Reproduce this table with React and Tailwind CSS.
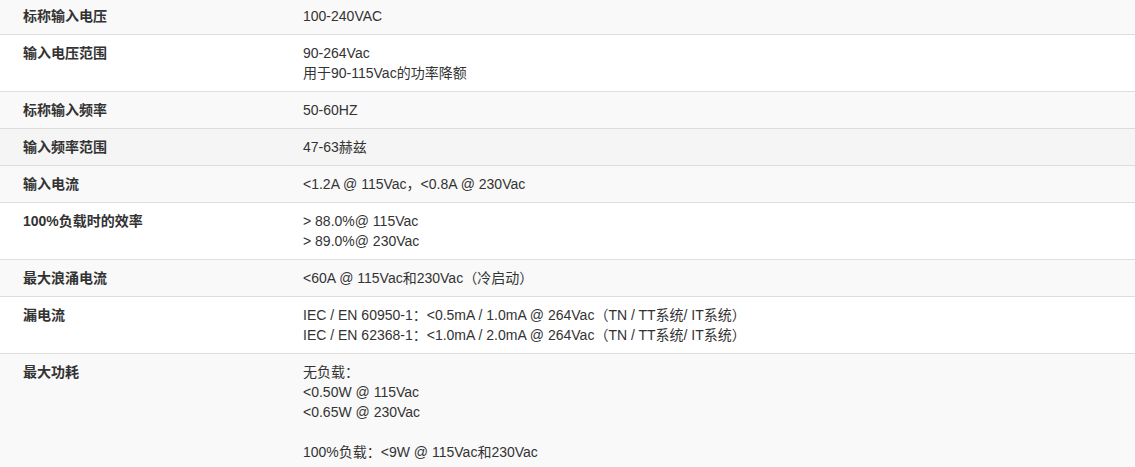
import React from "react";

const rows = [
  { label: "标称输入电压", lines: ["100-240VAC"], bg: "bg-[#f9f9f9]" },
  { label: "输入电压范围", lines: ["90-264Vac", "用于90-115Vac的功率降额"], bg: "bg-white" },
  { label: "标称输入频率", lines: ["50-60HZ"], bg: "bg-[#f9f9f9]" },
  { label: "输入频率范围", lines: ["47-63赫兹"], bg: "bg-[#f5f5f5]" },
  { label: "输入电流", lines: ["<1.2A @ 115Vac，<0.8A @ 230Vac"], bg: "bg-[#f9f9f9]" },
  { label: "100%负载时的效率", lines: ["> 88.0%@ 115Vac", "> 89.0%@ 230Vac"], bg: "bg-white" },
  { label: "最大浪涌电流", lines: ["<60A @ 115Vac和230Vac（冷启动）"], bg: "bg-[#f9f9f9]" },
  {
    label: "漏电流",
    lines: [
      "IEC / EN 60950-1：<0.5mA / 1.0mA @ 264Vac（TN / TT系统/ IT系统）",
      "IEC / EN 62368-1：<1.0mA / 2.0mA @ 264Vac（TN / TT系统/ IT系统）",
    ],
    bg: "bg-white",
  },
  {
    label: "最大功耗",
    lines: ["无负载：", "<0.50W @ 115Vac", "<0.65W @ 230Vac", "", "100%负载：<9W @ 115Vac和230Vac"],
    bg: "bg-[#f9f9f9]",
  },
];

export default function App() {
  return (
    <div
      className="w-[1135px] h-[467px] overflow-hidden bg-white text-[14px] leading-[20px] text-[#333]"
      style={{ fontFamily: '"Liberation Sans", Arial, "Noto Sans CJK SC", sans-serif' }}
    >
      <div className="-mt-[3px]">
        {rows.map((row) => (
          <div key={row.label} className={`flex border-t border-[#ddd] ${row.bg}`}>
            <div className="w-[295px] shrink-0 pl-[23px] pr-2 py-2 font-bold">{row.label}</div>
            <div className="flex-1 px-2 py-2">
              {row.lines.map((line, i) => (
                <div key={i} className="h-5 whitespace-pre">{line}</div>
              ))}
            </div>
          </div>
        ))}
      </div>
    </div>
  );
}
